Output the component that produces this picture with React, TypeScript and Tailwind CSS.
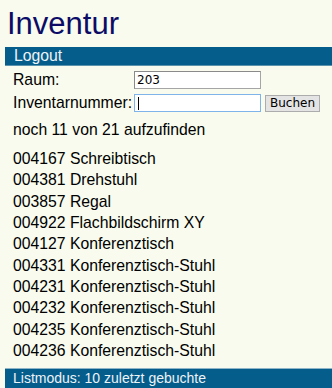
const items = [
  "004167 Schreibtisch",
  "004381 Drehstuhl",
  "003857 Regal",
  "004922 Flachbildschirm XY",
  "004127 Konferenztisch",
  "004331 Konferenztisch-Stuhl",
  "004231 Konferenztisch-Stuhl",
  "004232 Konferenztisch-Stuhl",
  "004235 Konferenztisch-Stuhl",
  "004236 Konferenztisch-Stuhl",
];

export default function App() {
  return (
    <div className="w-[332px] h-[388px] bg-[#f8fbee] overflow-hidden font-[family-name:Liberation_Sans,Arial,sans-serif] text-black">
      <h1 className="pl-[7px] pt-[7px] h-[47px] text-[31px] leading-[34px] text-[#0c0c66]">Inventur</h1>

      <div className="ml-[5px] h-[19px] bg-[#055d8c] border-b border-[#5b93ad] pl-[9px] text-[15.75px] leading-[18px] text-[#eef3f5]">
        Logout
      </div>

      <div className="pl-[13px] pt-[5px] text-[15.75px]">
        <div className="flex items-center h-[18px]">
          <span className="w-[121px] leading-[18px]">Raum:</span>
          <div className="w-[127px] h-[18px] border border-[#a5a5a5] border-t-[#8a8a8a] border-l-[#8a8a8a] bg-white pl-[2px] text-[12px] leading-[16px] font-[family-name:DejaVu_Sans,sans-serif] text-black">
            203
          </div>
        </div>
        <div className="flex items-center h-[18px] mt-[5px]">
          <span className="w-[121px] leading-[18px]">Inventarnummer:</span>
          <div className="w-[127px] h-[18px] border border-[#7eb4ea] bg-white pl-[3px] flex items-center">
            <span className="w-px h-[13px] bg-black"></span>
          </div>
          <button className="ml-[4px] w-[55px] h-[17px] border border-[#acacac] bg-[#e4e4e4] text-[12px] leading-[15px] font-[family-name:DejaVu_Sans,sans-serif] text-black">
            Buchen
          </button>
        </div>

        <div className="mt-[9px] leading-[18px]">noch 11 von 21 aufzufinden</div>

        <ul className="mt-[9px]">
          {items.map((it) => (
            <li key={it} className="leading-[21.33px] h-[21.33px]">
              {it}
            </li>
          ))}
        </ul>
      </div>

      <div className="ml-[5px] mt-[7px] h-[20px] bg-[#055d8c] border-t border-[#8fb5c8] pl-[8px] text-[14px] leading-[18px] text-[#eef3f5]">
        Listmodus: 10 zuletzt gebuchte
      </div>
    </div>
  );
}
